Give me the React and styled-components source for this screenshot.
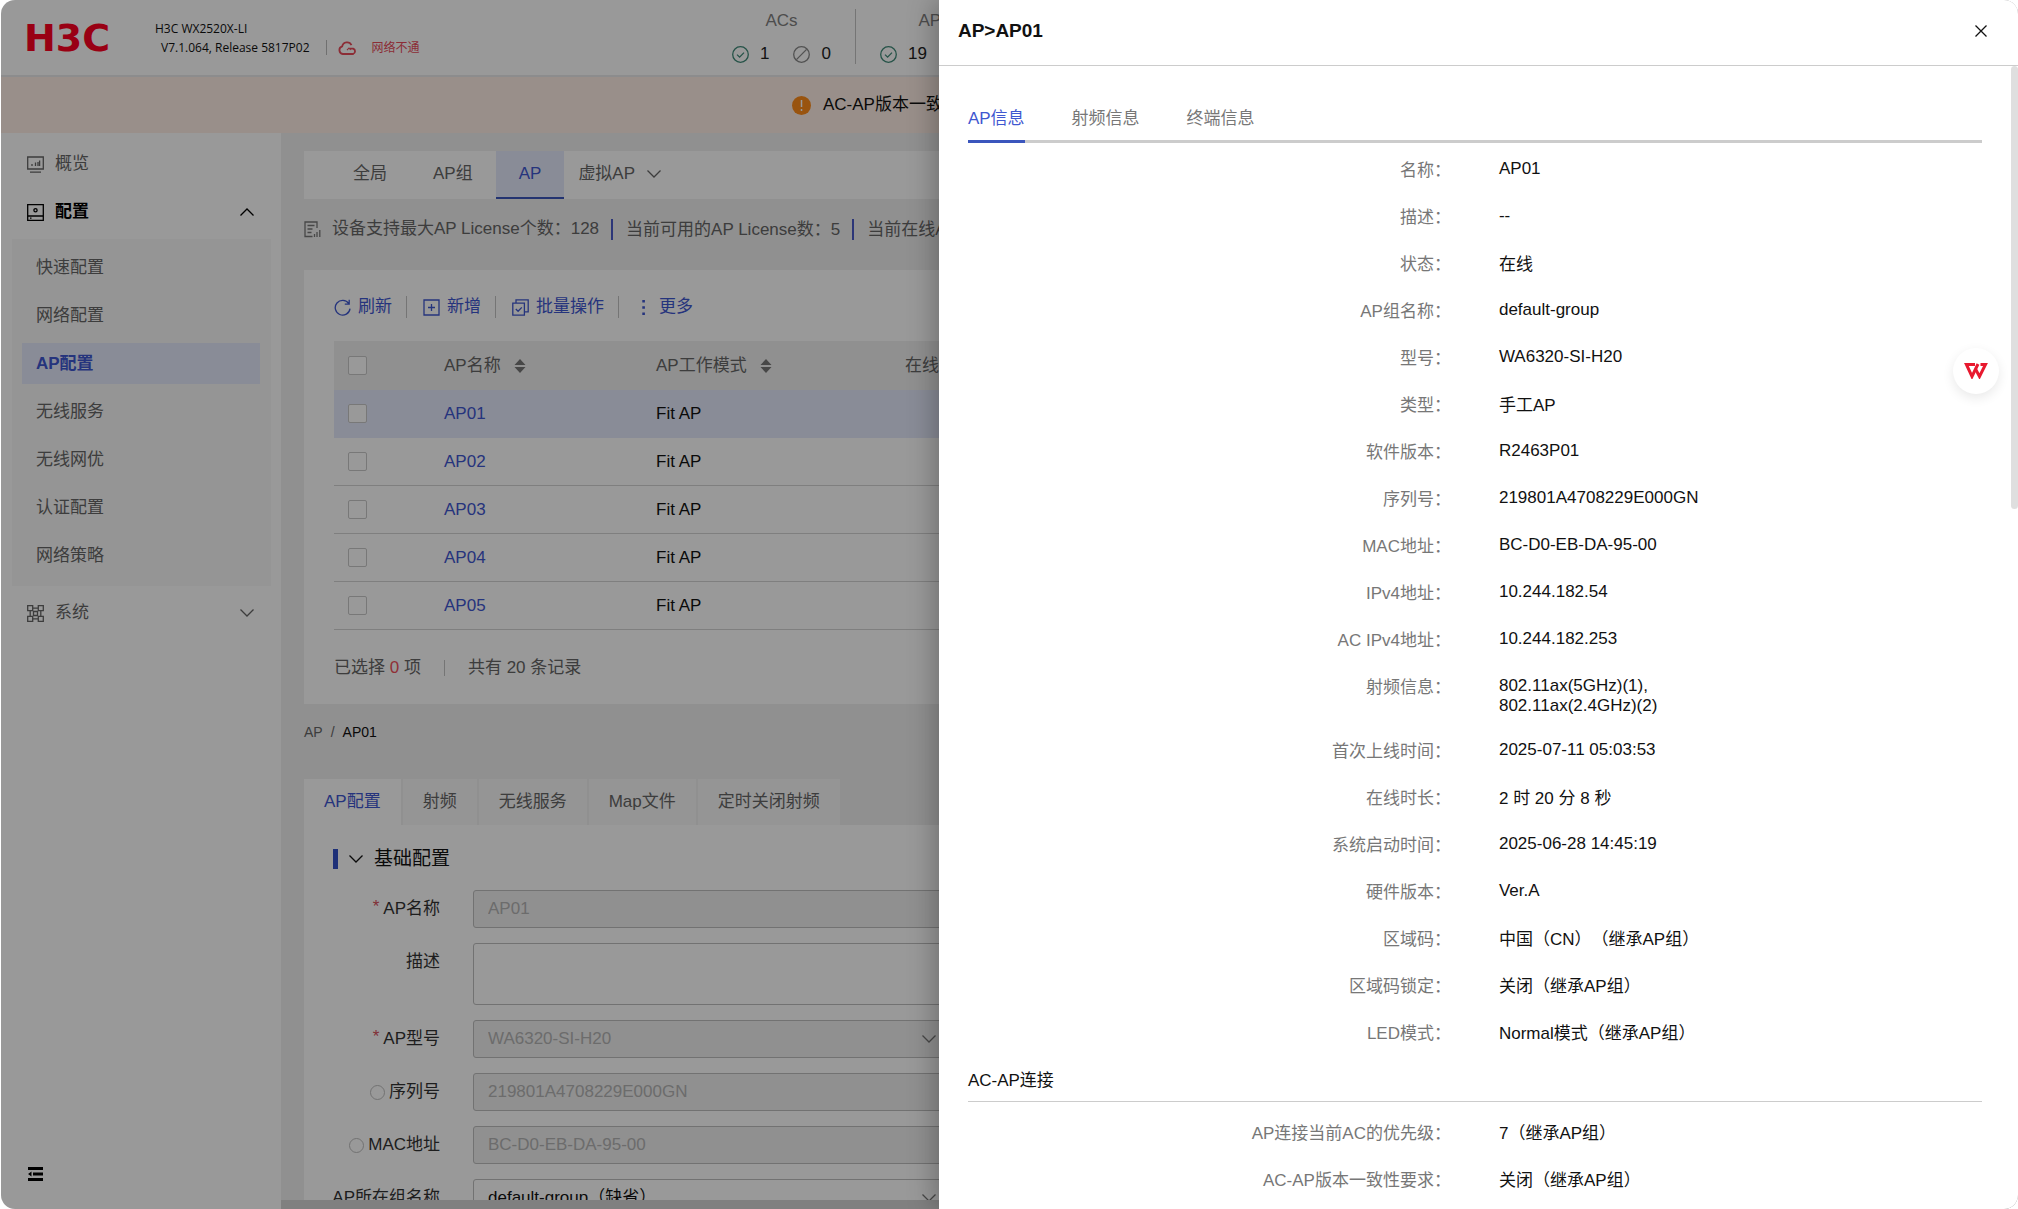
import { useState } from "react";
import styled, { createGlobalStyle } from "styled-components";

const GlobalStyle = createGlobalStyle`
  *, *::before, *::after {
    box-sizing: border-box;
  }

  body {
    margin: 0;
    background: #fff;
    color: #111;
    font-family: "Liberation Sans", "Noto Sans CJK SC", sans-serif;
    font-size: 17px;
    line-height: 24px;
    text-spacing-trim: space-all;
  }

  button, input, select, textarea {
    font: inherit;
    color: inherit;
    margin: 0;
  }

  button {
    border: 0;
    padding: 0;
    background: none;
    cursor: pointer;
  }

  a {
    color: inherit;
    text-decoration: none;
  }
`;

const Window = styled.div`
  position: relative;
  display: flex;
  flex-direction: column;
  height: 100vh;
  margin-left: 1px;
  border-radius: 14px;
  overflow: hidden;
  background: #fff;
  white-space: nowrap;
`;

/* header */

const Header = styled.header`
  display: flex;
  align-items: flex-start;
  flex-shrink: 0;
  height: 77px;
  padding-left: 23px;
  border-bottom: 2px solid #e9e9ec;
`;

const Logo = styled.div`
  width: 131px;
  padding-top: 20px;
  color: #ff0022;
  font-family: "DejaVu Sans", sans-serif;
  font-size: 38px;
  font-weight: 700;
  line-height: 36px;
`;

const DeviceInfo = styled.div`
  flex: 0 0 577px;
  padding-top: 19px;
  font-family: "Open Sans", "Noto Sans CJK SC", sans-serif;
  font-size: 12px;
  line-height: 19px;
`;

const VersionLine = styled.div`
  display: flex;
  align-items: center;
  padding-left: 6px;
`;

const Offline = styled.span`
  display: flex;
  align-items: center;
  gap: 15px;
  margin-left: 16px;
  padding-left: 11px;
  border-left: 1px solid #bbb;
  line-height: 15px;
  color: #e94b5a;
`;

const StatGroup = styled.div`
  display: flex;
  flex-direction: column;
  align-items: center;
  gap: 11px;
  margin-top: 9px;
  padding: 0 24px 0 ${({ $first }) => ($first ? "0" : "24px")};
  border-left: ${({ $first }) => ($first ? "0" : "1px solid #c4c4c4")};
  color: #808080;
`;

const StatValues = styled.div`
  display: flex;
  gap: 24px;
`;

const StatValue = styled.span`
  display: flex;
  align-items: center;
  gap: 11px;
  line-height: 20px;
  color: #222;
`;

const Alert = styled.div`
  display: flex;
  align-items: center;
  flex-shrink: 0;
  gap: 12px;
  height: 56px;
  padding-left: 791px;
  background: #ffefe6;
`;

const Body = styled.div`
  display: flex;
  flex: 1;
  min-height: 0;
`;

/* sidebar */

const Sidebar = styled.nav`
  display: flex;
  flex-direction: column;
  flex: 0 0 280px;
  padding: 7px 10px 21px 11px;
  background: #fff;
`;

const MenuItem = styled.button`
  display: flex;
  align-items: center;
  gap: 11px;
  height: 48px;
  padding: 0 17px 0 15px;
  text-align: left;
  color: ${({ $open }) => ($open ? "#000" : "#666")};
  font-weight: ${({ $open }) => ($open ? 700 : 400)};

  span {
    flex: 1;
  }
`;

const SubMenu = styled.div`
  display: flex;
  flex-direction: column;
  gap: 7px;
  margin: 3px 0;
  padding: 8px 11px 10px 10px;
  background: #f8f8f8;
`;

const SubItem = styled.a`
  height: 41px;
  padding-left: 14px;
  line-height: 41px;
  background: ${({ $active }) => ($active ? "#e5e9fc" : "transparent")};
  color: ${({ $active }) => ($active ? "#3f57d0" : "#666")};
  font-weight: ${({ $active }) => ($active ? 700 : 400)};
`;

const CollapseButton = styled.button`
  margin: auto 0 0 15px;
  width: 17px;
  height: 24px;
`;

/* workspace */

const Workspace = styled.div`
  display: flex;
  flex-direction: column;
  flex: 1;
  min-width: 0;
  background: #f0f0f0;
`;

const Content = styled.main`
  flex: 1;
  min-height: 0;
  padding: 18px 24px 0 23px;
  overflow: hidden;
`;

const ScrollTrack = styled.div`
  flex: 0 0 9px;
  background: #d6d6d6;
`;

const TopTabs = styled.div`
  display: flex;
  height: 48px;
  padding-left: 26px;
  background: #fff;
`;

const TopTab = styled.button`
  display: flex;
  align-items: center;
  gap: 12px;
  padding: 0 ${({ $wide }) => ($wide ? "14px" : "23px")};
  border-bottom: 2px solid ${({ $active }) => ($active ? "#3b56bd" : "transparent")};
  background: ${({ $active }) => ($active ? "#e5e9fc" : "transparent")};
  color: ${({ $active }) => ($active ? "#3f57d0" : "#666")};
`;

const LicenseBar = styled.div`
  display: flex;
  align-items: center;
  height: 60px;
  color: #666;

  svg {
    margin-right: 11px;
  }

  span + span {
    margin-left: 12px;
    padding-left: 13px;
    border-left: 2px solid #4a5ac8;
    line-height: 21px;
  }
`;

const Card = styled.section`
  margin-top: 11px;
  padding: 23px 30px 24px;
  background: #fff;
`;

const Toolbar = styled.div`
  display: flex;
  align-items: center;
  height: 28px;
  margin-bottom: 20px;
`;

const ToolButton = styled.button`
  display: flex;
  align-items: center;
  gap: 7px;
  color: #3f57d0;
  line-height: 22px;

  & + & {
    margin-left: 14px;
    padding-left: 16px;
    border-left: 1px solid #c4c4c4;
  }
`;

const Table = styled.table`
  width: 100%;
  table-layout: fixed;
  border-collapse: separate;
  border-spacing: 0;
`;

const HeadCell = styled.th`
  width: ${({ $width }) => $width || "auto"};
  height: 49px;
  padding: 0 0 0 ${({ $pad }) => $pad || "24px"};
  background: #f0f0f0;
  color: #666;
  font-weight: 400;
  text-align: left;
  box-shadow: ${({ $pinned }) => ($pinned ? "3px 0 4px -2px #c8c8c8" : "none")};
  clip-path: inset(0 -8px 0 0);
`;

const SortLabel = styled.span`
  display: inline-flex;
  align-items: center;
  gap: 13px;
`;

const Cell = styled.td`
  height: 48px;
  padding: 0 0 0 ${({ $pad }) => $pad || "24px"};
  border-bottom: 1px solid ${({ $selected }) => ($selected ? "#e5e9fc" : "#d4d4d4")};
  background: ${({ $selected }) => ($selected ? "#e5e9fc" : "#fff")};
  box-shadow: ${({ $pinned }) => ($pinned ? "3px 0 4px -2px #c8c8c8" : "none")};
  clip-path: inset(0 -8px 0 0);

  a {
    color: #3f57d0;
  }
`;

const Checkbox = styled.input.attrs({ type: "checkbox" })`
  appearance: none;
  display: block;
  width: 19px;
  height: 19px;
  border: 1px solid #c8c8c8;
  border-radius: 2px;
  background: #fff;
`;

const TableFooter = styled.div`
  display: flex;
  align-items: center;
  margin-top: 26px;
  color: #666;

  b {
    color: #f0505a;
    font-weight: 400;
  }
`;

const Divider = styled.i`
  width: 1px;
  height: 16px;
  margin: 0 23px;
  background: #c4c4c4;
`;

const Breadcrumb = styled.div`
  display: flex;
  gap: 8px;
  height: 75px;
  padding-top: 16px;
  color: #666;
  font-size: 14px;

  span:last-child {
    color: #111;
  }
`;

const PanelTabs = styled.div`
  display: flex;
  gap: 2px;
  height: 46px;
`;

const PanelTab = styled.button`
  padding: 0 20px;
  background: ${({ $active }) => ($active ? "#fff" : "#f8f8f8")};
  color: ${({ $active }) => ($active ? "#3f57d0" : "#666")};
`;

const Panel = styled.section`
  padding: 20px 29px 24px;
  background: #fff;
`;

const PanelTitle = styled.h2`
  display: flex;
  align-items: center;
  gap: 11px;
  margin: 0 0 17px;
  font-size: 19px;
  font-weight: 400;
  line-height: 28px;

  &::before {
    content: "";
    width: 5px;
    height: 20px;
    background: #3350c8;
  }
`;

const Form = styled.form`
  display: grid;
  grid-template-columns: 107px 474px;
  column-gap: 33px;
  row-gap: 15px;
`;

const FieldLabel = styled.label`
  display: flex;
  align-items: center;
  justify-content: flex-end;
  gap: 4px;
  height: 38px;
  color: #333;

  em {
    align-self: flex-start;
    padding-top: 5px;
    font-style: normal;
    color: #d8505a;
  }
`;

const Radio = styled.input.attrs({ type: "radio" })`
  appearance: none;
  width: 15px;
  height: 15px;
  border: 1px solid #bebebe;
  border-radius: 50%;
`;

const TextInput = styled.input`
  height: 38px;
  padding: 0 14px;
  border: 1px solid #bebebe;
  border-radius: 3px;
  background: #f0f0f0;
  color: #b4b4b4;
`;

const TextArea = styled.textarea`
  height: 62px;
  border: 1px solid #bebebe;
  border-radius: 3px;
  background: #fff;
  resize: none;
`;

const SelectBox = styled.div`
  position: relative;

  svg {
    position: absolute;
    top: 12px;
    right: 11px;
  }
`;

const Select = styled.select`
  appearance: none;
  width: 100%;
  height: 38px;
  padding: 0 14px;
  border: 1px solid #bebebe;
  border-radius: 3px;
  background: #fff;
  color: #111;
  opacity: 1;

  &:disabled {
    background: #f0f0f0;
    color: #b4b4b4;
  }
`;

/* drawer */

const Mask = styled.div`
  position: absolute;
  inset: 0;
  background: rgba(0, 0, 0, 0.4);
`;

const Drawer = styled.aside`
  position: absolute;
  top: 0;
  right: 0;
  bottom: 0;
  display: flex;
  flex-direction: column;
  width: 53.5%;
  background: #fff;
  box-shadow: -6px 0 24px rgba(0, 0, 0, 0.25);
`;

const DrawerHeader = styled.div`
  display: flex;
  align-items: center;
  justify-content: space-between;
  flex-shrink: 0;
  height: 66px;
  padding: 0 30px 3px 19px;
  border-bottom: 1px solid #ccc;

  h1 {
    margin: 0;
    font-size: 19px;
  }

  button {
    display: flex;
  }
`;

const DrawerBody = styled.div`
  flex: 1;
  min-height: 0;
  padding: 37px 36px 0 29px;
  overflow: hidden;
`;

const DrawerTabs = styled.div`
  display: flex;
  gap: 47px;
  height: 40px;
  box-shadow: inset 0 -3px #ccc;
`;

const DrawerTab = styled.button`
  padding-bottom: 6px;
  border-bottom: 3px solid ${({ $active }) => ($active ? "#3b56bd" : "transparent")};
  color: ${({ $active }) => ($active ? "#3f57d0" : "#777")};
`;

const DetailList = styled.dl`
  display: grid;
  row-gap: 24px;
  margin: 0;
  padding: ${({ $first }) => ($first ? "16px" : "20px")} 0 0;
`;

const DetailRow = styled.div`
  display: grid;
  grid-template-columns: 1fr 1fr;
  column-gap: 48px;

  dt {
    color: #777;
    line-height: 23px;
    text-align: right;
  }

  dd {
    margin: 0;
    line-height: ${({ $cjk }) => ($cjk ? "23px" : "20px")};
    white-space: pre-line;
  }
`;

const SectionTitle = styled.h2`
  margin: 24px 0 0;
  padding-bottom: 8px;
  border-bottom: 1px solid #ccc;
  font-size: 17px;
  font-weight: 400;
`;

const ScrollThumb = styled.div`
  position: absolute;
  top: 66px;
  right: 0;
  width: 7px;
  height: 443px;
  border-radius: 4px;
  background: #dfdfdf;
`;

const FloatButton = styled.button`
  position: absolute;
  top: 348px;
  right: 19px;
  display: flex;
  align-items: center;
  justify-content: center;
  width: 46px;
  height: 46px;
  border-radius: 50%;
  background: #fff;
  box-shadow: 0 4px 12px rgba(0, 0, 0, 0.09);
`;

const subMenu = ["快速配置", "网络配置", "AP配置", "无线服务", "无线网优", "认证配置", "网络策略"];
const aps = ["AP01", "AP02", "AP03", "AP04", "AP05"];
const panelTabs = ["AP配置", "射频", "无线服务", "Map文件", "定时关闭射频"];
const drawerTabs = ["AP信息", "射频信息", "终端信息"];

const details = [
  ["名称", "AP01"],
  ["描述", "--"],
  ["状态", "在线"],
  ["AP组名称", "default-group"],
  ["型号", "WA6320-SI-H20"],
  ["类型", "手工AP"],
  ["软件版本", "R2463P01"],
  ["序列号", "219801A4708229E000GN"],
  ["MAC地址", "BC-D0-EB-DA-95-00"],
  ["IPv4地址", "10.244.182.54"],
  ["AC IPv4地址", "10.244.182.253"],
  ["射频信息", "802.11ax(5GHz)(1),\n802.11ax(2.4GHz)(2)"],
  ["首次上线时间", "2025-07-11 05:03:53"],
  ["在线时长", "2 时 20 分 8 秒"],
  ["系统启动时间", "2025-06-28 14:45:19"],
  ["硬件版本", "Ver.A"],
  ["区域码", "中国（CN）（继承AP组）"],
  ["区域码锁定", "关闭（继承AP组）"],
  ["LED模式", "Normal模式（继承AP组）"],
];

const connection = [
  ["AP连接当前AC的优先级", "7（继承AP组）"],
  ["AC-AP版本一致性要求", "关闭（继承AP组）"],
];

function Icon({ size = 17, color = "currentColor", children, box = 17 }) {
  return (
    <svg
      width={size}
      height={size}
      viewBox={`0 0 ${box} ${box}`}
      fill="none"
      stroke={color}
      strokeWidth="1.3"
      aria-hidden="true"
    >
      {children}
    </svg>
  );
}

function Chevron({ up, color }) {
  return (
    <Icon size={14} box={14} color={color}>
      <path d={up ? "M.5 10.5 7 4l6.5 6.5" : "M.5 3.5 7 10l6.5-6.5"} />
    </Icon>
  );
}

function SortIcon() {
  return (
    <svg width="12" height="16" viewBox="0 0 12 16" fill="#777" aria-hidden="true">
      <path d="M6 1l5.5 6H.5zM6 15l5.5-6H.5z" />
    </svg>
  );
}

function OnlineIcon() {
  return (
    <Icon color="#3f8a78">
      <circle cx="8.5" cy="8.5" r="7.8" />
      <path d="M5 8.6l2.6 2.5L12 6.6" />
    </Icon>
  );
}

function OfflineIcon() {
  return (
    <Icon color="#888">
      <circle cx="8.5" cy="8.5" r="7.8" />
      <path d="M3.4 13.6L13.6 3.4" />
    </Icon>
  );
}

function TopHeader() {
  return (
    <Header>
      <Logo>H3C</Logo>
      <DeviceInfo>
        <div>H3C WX2520X-LI</div>
        <VersionLine>
          V7.1.064, Release 5817P02
          <Offline>
            <svg width="19" height="14" viewBox="0 0 19 14" fill="none" stroke="currentColor" strokeWidth="1.8" aria-hidden="true">
              <path d="M13.5 4.2A4.9 4.9 0 0 0 4.2 5.4 3.9 3.9 0 0 0 4.8 13h10.4a2.9 2.9 0 0 0 0-5.4H12" />
              <path d="M9 9.2l2-2.2 1.6 1.8" strokeWidth="1.1" />
            </svg>
            网络不通
          </Offline>
        </VersionLine>
      </DeviceInfo>
      <StatGroup $first>
        ACs
        <StatValues>
          <StatValue><OnlineIcon />1</StatValue>
          <StatValue><OfflineIcon />0</StatValue>
        </StatValues>
      </StatGroup>
      <StatGroup>
        APs
        <StatValues>
          <StatValue><OnlineIcon />19</StatValue>
          <StatValue><OfflineIcon />1</StatValue>
        </StatValues>
      </StatGroup>
    </Header>
  );
}

function SideMenu() {
  return (
    <Sidebar>
      <MenuItem type="button">
        <Icon>
          <path d="M.7 1h15.6v12H.7zM3 16.2h11M5 10V8M8.5 10V6.5M11 10V6M12.6 10V4.5" />
        </Icon>
        <span>概览</span>
      </MenuItem>
      <MenuItem type="button" $open>
        <Icon>
          <path d="M.7.7h15.6v15.6H.7zM.7 12h15.6M3 14.2h1.5" />
          <circle cx="8.5" cy="6.2" r="1.6" />
        </Icon>
        <span>配置</span>
        <Chevron up />
      </MenuItem>
      <SubMenu>
        {subMenu.map((item) => (
          <SubItem href="#" key={item} $active={item === "AP配置"}>
            {item}
          </SubItem>
        ))}
      </SubMenu>
      <MenuItem type="button">
        <Icon>
          <path d="M.7.7h5v5h-5zM11.3.7h5v5h-5zM.7 11.3h5v5h-5zM11.3 11.3h5v5h-5zM6.5 6.5h4v4h-4zM5.7 3.2h5.6M5.7 13.8h5.6M3.2 5.7v5.6M13.8 5.7v5.6" />
        </Icon>
        <span>系统</span>
        <Chevron />
      </MenuItem>
      <CollapseButton type="button" aria-label="收起菜单">
        <svg width="17" height="14" viewBox="0 0 17 14" aria-hidden="true">
          <path d="M1 0h15v3H1zM6 5.5h10v3H6zM1 11h15v3H1zM1 7l3.5-2.5v5z" fill="#000" />
        </svg>
      </CollapseButton>
    </Sidebar>
  );
}

function ApTable() {
  return (
    <Card>
      <Toolbar>
        <ToolButton type="button">
          <Icon>
            <path d="M14.8 4.6A7.4 7.4 0 1 0 16 9.6M15.2.8v4.4h-4.4" />
          </Icon>
          刷新
        </ToolButton>
        <ToolButton type="button">
          <Icon>
            <path d="M1 1h15v15H1zM8.5 5v7M5 8.5h7" />
          </Icon>
          新增
        </ToolButton>
        <ToolButton type="button">
          <Icon>
            <path d="M.8 4.2h11.6v12H.8zM4 4V.9h12.2v12H12.6M3.8 10l2.3 2.3L9.8 8.4" />
          </Icon>
          批量操作
        </ToolButton>
        <ToolButton type="button">
          <Icon>
            <path d="M7.3 1h2.6v2.6H7.3zM7.3 7.2h2.6v2.6H7.3zM7.3 13.4h2.6V16H7.3z" fill="currentColor" stroke="none" />
          </Icon>
          更多
        </ToolButton>
      </Toolbar>
      <Table>
        <thead>
          <tr>
            <HeadCell $width="86px" $pad="14px">
              <Checkbox aria-label="全选" />
            </HeadCell>
            <HeadCell $width="190px" $pinned>
              <SortLabel>AP名称 <SortIcon /></SortLabel>
            </HeadCell>
            <HeadCell $width="271px" $pad="46px">
              <SortLabel>AP工作模式 <SortIcon /></SortLabel>
            </HeadCell>
            <HeadCell>在线时长</HeadCell>
          </tr>
        </thead>
        <tbody>
          {aps.map((ap) => (
            <tr key={ap}>
              <Cell $pad="14px" $selected={ap === "AP01"}>
                <Checkbox aria-label={ap} />
              </Cell>
              <Cell $selected={ap === "AP01"} $pinned>
                <a href="#">{ap}</a>
              </Cell>
              <Cell $pad="46px" $selected={ap === "AP01"}>Fit AP</Cell>
              <Cell $selected={ap === "AP01"} />
            </tr>
          ))}
        </tbody>
      </Table>
      <TableFooter>
        <span>已选择 <b>0</b> 项</span>
        <Divider />
        <span>共有 20 条记录</span>
      </TableFooter>
    </Card>
  );
}

function ApForm() {
  return (
    <Form>
      <FieldLabel htmlFor="ap-name"><em>*</em>AP名称</FieldLabel>
      <TextInput id="ap-name" defaultValue="AP01" disabled />
      <FieldLabel htmlFor="ap-desc">描述</FieldLabel>
      <TextArea id="ap-desc" />
      <FieldLabel htmlFor="ap-model"><em>*</em>AP型号</FieldLabel>
      <SelectBox>
        <Select id="ap-model" disabled>
          <option>WA6320-SI-H20</option>
        </Select>
        <Chevron color="#777" />
      </SelectBox>
      <FieldLabel><Radio name="ap-id" disabled />序列号</FieldLabel>
      <TextInput aria-label="序列号" defaultValue="219801A4708229E000GN" disabled />
      <FieldLabel><Radio name="ap-id" disabled />MAC地址</FieldLabel>
      <TextInput aria-label="MAC地址" defaultValue="BC-D0-EB-DA-95-00" disabled />
      <FieldLabel htmlFor="ap-group">AP所在组名称</FieldLabel>
      <SelectBox>
        <Select id="ap-group">
          <option>default-group（缺省）</option>
        </Select>
        <Chevron color="#777" />
      </SelectBox>
    </Form>
  );
}

function Details({ items, first }) {
  return (
    <DetailList $first={first}>
      {items.map(([label, value]) => (
        <DetailRow key={label} $cjk={/[\u4e00-\u9fff]/.test(value)}>
          <dt>{label}：</dt>
          <dd>{value}</dd>
        </DetailRow>
      ))}
    </DetailList>
  );
}

function ApDrawer() {
  const [tab, setTab] = useState("AP信息");

  return (
    <Drawer>
      <DrawerHeader>
        <h1>AP&gt;AP01</h1>
        <button type="button" aria-label="关闭">
          <Icon size={14} box={14}>
            <path d="M1.5 1.5l11 11M12.5 1.5l-11 11" />
          </Icon>
        </button>
      </DrawerHeader>
      <DrawerBody>
        <DrawerTabs>
          {drawerTabs.map((item) => (
            <DrawerTab type="button" key={item} $active={item === tab} onClick={() => setTab(item)}>
              {item}
            </DrawerTab>
          ))}
        </DrawerTabs>
        <Details items={details} first />
        <SectionTitle>AC-AP连接</SectionTitle>
        <Details items={connection} />
      </DrawerBody>
      <ScrollThumb />
      <FloatButton type="button" aria-label="WPS">
        <svg width="24" height="16" viewBox="0 0 24 16" fill="none" stroke="#e8192f" strokeWidth="3" aria-hidden="true">
          <path d="M11 1.5H2.4L8 13.5 14 1" />
          <path d="M11.5 6l4 7.5 6-12h-5" />
        </svg>
      </FloatButton>
    </Drawer>
  );
}

export default function App() {
  return (
    <>
      <GlobalStyle />
      <Window>
        <TopHeader />
        <Alert>
          <svg width="19" height="19" viewBox="0 0 19 19" aria-hidden="true">
            <circle cx="9.5" cy="9.5" r="9.5" fill="#ff8c1a" />
            <path d="M9.5 4v7M9.5 13v2" stroke="#fff" strokeWidth="1.5" />
          </svg>
          AC-AP版本一致
        </Alert>
        <Body>
          <SideMenu />
          <Workspace>
            <Content>
              <TopTabs>
                <TopTab type="button">全局</TopTab>
                <TopTab type="button">AP组</TopTab>
                <TopTab type="button" $active>AP</TopTab>
                <TopTab type="button" $wide>虚拟AP <Chevron /></TopTab>
              </TopTabs>
              <LicenseBar>
                <Icon color="#777">
                  <path d="M8.5 15.5H1V1h12v6M3.5 4.5h7M3.5 8h5M3.5 11.5h4M10.5 16v-3M13 16v-5M15.8 16V9" />
                </Icon>
                <span>设备支持最大AP License个数：128</span>
                <span>当前可用的AP License数：5</span>
                <span>当前在线AP</span>
              </LicenseBar>
              <ApTable />
              <Breadcrumb>
                <span>AP</span>
                <span>/</span>
                <span>AP01</span>
              </Breadcrumb>
              <PanelTabs>
                {panelTabs.map((item) => (
                  <PanelTab type="button" key={item} $active={item === "AP配置"}>
                    {item}
                  </PanelTab>
                ))}
              </PanelTabs>
              <Panel>
                <PanelTitle>
                  <Chevron />
                  基础配置
                </PanelTitle>
                <ApForm />
              </Panel>
            </Content>
            <ScrollTrack />
          </Workspace>
        </Body>
        <Mask />
        <ApDrawer />
      </Window>
    </>
  );
}
